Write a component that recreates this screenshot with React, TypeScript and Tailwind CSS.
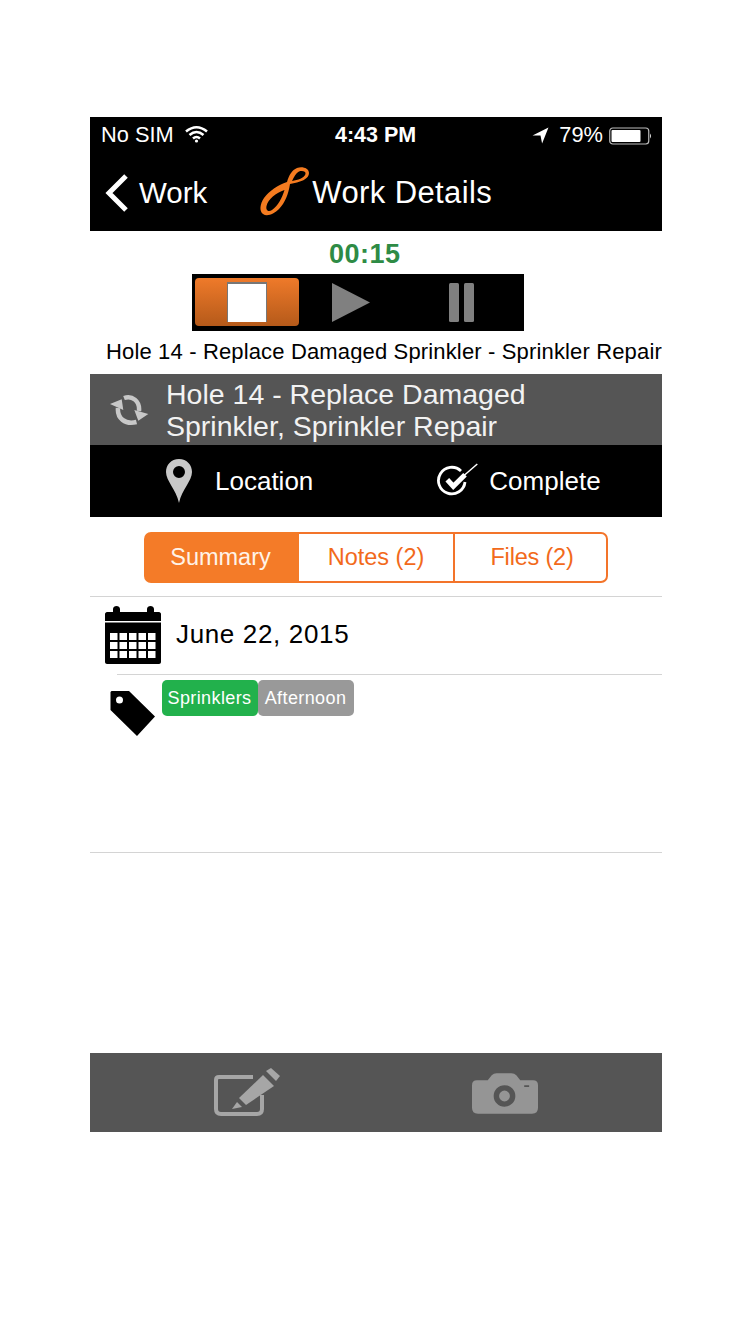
export default function App() {
  return (
    <div className="w-[749px] h-[1321px] bg-white pt-[117px] pl-[90px] font-['Liberation_Sans',Arial,sans-serif] overflow-hidden">
      <div className="w-[572px] h-[1015px] flex flex-col">
        <header className="h-[114px] bg-black text-white shrink-0">
          <div className="h-[37px] pl-[11px] pr-[9px] flex items-center text-[21.8px] relative">
            <span>No SIM</span>
            <svg className="ml-[11px] mb-[3px]" width="23" height="18" viewBox="0 0 23 18" fill="none" stroke="#fff" strokeWidth="2.6">
              <path d="M1 6.5 Q11.5 -2 22 6.5" />
              <path d="M4.5 10 Q11.5 4 18.5 10" />
              <path d="M8 13.5 Q11.5 10.5 15 13.5" />
              <circle cx="11.5" cy="16" r="1.6" fill="#fff" stroke="none" />
            </svg>
            <span className="absolute left-[245px] font-bold text-[21.5px]">4:43 PM</span>
            <div className="ml-auto flex items-center">
              <svg width="17" height="17" viewBox="0 0 16 16" fill="#fff"><path d="M0.5 8 L15.5 0.5 L9.5 15.5 L8 8 Z" /></svg>
              <span className="ml-[10px]">79%</span>
              <svg className="ml-[6px]" width="44" height="18" viewBox="0 0 44 18" fill="none">
                <rect x="0.75" y="1" width="39" height="16" rx="3" stroke="#bbb" strokeWidth="1.2" />
                <rect x="2.5" y="3" width="29" height="12" rx="1" fill="#fff" />
                <path d="M41 6.5 Q43 9 41 11.5 Z" fill="#ddd" />
              </svg>
            </div>
          </div>
          <div className="h-[77px] flex items-center relative">
            <svg className="ml-[15px]" width="24" height="38" viewBox="0 0 24 38" fill="none" stroke="#fff" strokeWidth="5">
              <path d="M21 2 L4 19 L21 36" />
            </svg>
            <span className="ml-[10px] text-[29.5px] leading-none">Work</span>
            <svg className="ml-[52px] mt-[-2px]" width="52" height="52" viewBox="0 0 52 52">
              <path fillRule="evenodd" fill="#f47b20" d="M28 16 C30 9 33 4 38 2 C43 0 50 2 50 7 C50 12 44 15 38 16.5 L31 18 C29.5 28 26 37 20 43 C15 48 8 51 4 48 C0 45 1 38 5 32 C10 25 19 19 28 16 Z M33 15 C39 14 45 12 46.5 8 C47 5 43 4.5 40 5.5 C37 7 35 11 33 15 Z M25.5 24 C17 27 9 33 7.5 40 C6.5 45 10 46 13 44 C19 40 23 32 25.5 24 Z" />
            </svg>
            <span className="text-[31px] leading-none ml-[1px] tracking-[0.4px]">Work Details</span>
          </div>
        </header>

        <div className="h-[143px] shrink-0 flex flex-col relative">
          <div className="pt-[9px] pl-[239px] text-[27px] leading-[29px] font-bold text-[#2e8b45] tracking-[0.5px]">00:15</div>
          <div className="ml-[102px] mt-[5px] w-[332px] h-[57px] bg-black flex items-start pl-[3px] pt-[4px]">
            <div className="w-[104px] h-[48px] rounded-[4px] bg-gradient-to-b from-[#ef7a2a] to-[#b55a1a] flex items-center justify-center">
              <div className="w-[40px] h-[40px] bg-white border-t-2 border-x border-[#777]" />
            </div>
            <svg className="ml-[33px] mt-[5px]" width="38" height="39" viewBox="0 0 38 39"><path d="M0 0 L38 19.5 L0 39 Z" fill="#808080" /></svg>
            <svg className="ml-[79px] mt-[5px]" width="26" height="39" viewBox="0 0 26 39" fill="#808080">
              <rect width="10" height="39" rx="1.5" />
              <rect x="15" width="10" height="39" rx="1.5" />
            </svg>
          </div>
          <div className="pl-[16px] mt-[9px] text-[22px] leading-[23px] text-black whitespace-nowrap overflow-hidden tracking-[0.15px]">Hole 14 - Replace Damaged Sprinkler - Sprinkler Repair</div>
        </div>

        <div className="h-[71px] bg-[#555] flex items-center shrink-0 text-[#f2f2f2]">
          <svg className="ml-[20px]" width="40" height="32" viewBox="0 0 40 32" fill="none">
            <path d="M14 4 C22 1 30 7 29 17" stroke="#c8c8c8" strokeWidth="4.5" />
            <path d="M26.5 28 C15 31 7 24 8 14" stroke="#c8c8c8" strokeWidth="4.5" />
            <path d="M24.3 16 L38.3 20 L28.3 26.7 Z M0 10 L11.7 5.3 L13.3 16 Z" fill="#c8c8c8" />
          </svg>
          <div className="ml-[16px] text-[28.5px] leading-[32px]">Hole 14 - Replace Damaged<br />Sprinkler, Sprinkler Repair</div>
        </div>

        <div className="h-[72px] bg-black text-white flex items-center shrink-0 text-[26px]">
          <svg className="ml-[76px]" width="26" height="44" viewBox="0 0 26 44">
            <path fillRule="evenodd" fill="#c8c8c8" d="M13 0 C21 0 26 6 26 13 C26 22 16 30 13 44 C10 30 0 22 0 13 C0 6 5 0 13 0 Z M13 7 A6 6 0 1 0 13 19 A6 6 0 1 0 13 7 Z" />
          </svg>
          <span className="ml-[23px] mt-[1px]">Location</span>
          <svg className="ml-[124px]" width="46" height="36" viewBox="0 0 46 36" fill="none" stroke="#fff">
            <path d="M24 8 A13.3 13.3 0 1 0 28 19" strokeWidth="2.8" />
            <path d="M10.3 16.7 L16.3 23.3 L28 11.7" strokeWidth="5" />
            <path d="M27 12.5 L40.3 1" strokeWidth="1.5" />
          </svg>
          <span className="ml-[6px] mt-[1px]">Complete</span>
        </div>

        <div className="mt-[15px] ml-[54px] w-[464px] h-[51px] flex text-[23.5px] shrink-0 text-[#f26a1b]">
          <div className="w-[155px] bg-[#f47b28] text-[#fff3e8] rounded-l-[7px] flex items-center justify-center pt-[1px] pr-[2px]">Summary</div>
          <div className="w-[154px] border-y-2 border-[#f3742a] flex items-center justify-center pt-[1px]">Notes (2)</div>
          <div className="flex-1 border-2 border-[#f3742a] rounded-r-[7px] flex items-center justify-center pt-[1px] pl-[3px] tracking-[-0.2px]">Files (2)</div>
        </div>

        <div className="mt-[13px] border-t border-[#d4d4d4] h-[78px] shrink-0 flex items-center">
          <svg className="ml-[15px] mt-[-1px]" width="56" height="58" viewBox="0 0 56 58">
            <path d="M2 6 H8 V3 C8 -1 15 -1 15 3 V6 H42 V3 C42 -1 49 -1 49 3 V6 H54 C55 6 56 7 56 8 V15 H0 V8 C0 7 1 6 2 6 Z" />
            <path d="M0 16.5 H56 V56 C56 57 55 58 54 58 H2 C1 58 0 57 0 56 Z" />
            <g fill="#fff">
              <rect x="5" y="27" width="7.5" height="7" /><rect x="14.5" y="27" width="7.5" height="7" /><rect x="24" y="27" width="7.5" height="7" /><rect x="33.5" y="27" width="7.5" height="7" /><rect x="43" y="27" width="7.5" height="7" />
              <rect x="5" y="36" width="7.5" height="7" /><rect x="14.5" y="36" width="7.5" height="7" /><rect x="24" y="36" width="7.5" height="7" /><rect x="33.5" y="36" width="7.5" height="7" /><rect x="43" y="36" width="7.5" height="7" />
              <rect x="5" y="45" width="7.5" height="7" /><rect x="14.5" y="45" width="7.5" height="7" /><rect x="24" y="45" width="7.5" height="7" /><rect x="33.5" y="45" width="7.5" height="7" /><rect x="43" y="45" width="7.5" height="7" />
            </g>
          </svg>
          <span className="ml-[15px] mt-[-3px] text-[26px] tracking-[0.65px] text-black">June 22, 2015</span>
        </div>

        <div className="ml-[27px] border-t border-[#d4d4d4] h-[178px] shrink-0 flex items-start pt-[5px]">
          <svg className="ml-[-7px] mt-[10px]" width="45" height="46" viewBox="0 0 45 46">
            <path fillRule="evenodd" d="M1.5 1 H19 L45 26.5 L27 46 L0.5 20 V2 Z M9.5 6.5 A3.5 3.5 0 1 0 9.5 13.5 A3.5 3.5 0 1 0 9.5 6.5 Z" />
          </svg>
          <div className="flex text-[18px] text-white ml-[7px]">
            <div className="h-[36px] w-[96px] rounded-[5px] bg-[#22b14c] flex items-center justify-center tracking-[0.4px] pr-[1px]">Sprinklers</div>
            <div className="h-[36px] w-[96px] rounded-[5px] bg-[#999] flex items-center justify-center tracking-[0.4px] pr-[1px]">Afternoon</div>
          </div>
        </div>

        <div className="border-t border-[#d4d4d4] flex-1" />

        <div className="h-[79px] bg-[#555] shrink-0 flex items-center">
          <svg className="ml-[123px]" width="68" height="50" viewBox="0 0 68 50" fill="none">
            <path d="M40 9 H6 Q3 9 3 12 V41 Q3 46 8 46 H44 Q49 46 49 41 V27" stroke="#a6a6a6" strokeWidth="4" />
            <path d="M50 7 L61 18 L33 37 L26 30 Z" fill="#a6a6a6" />
            <path d="M24 34 L29 39 L19 41 Z" fill="#a6a6a6" />
            <path d="M53 3 L58 0 L67 8 L63 13 Z" fill="#a6a6a6" />
          </svg>
          <svg className="ml-[191px] mt-[1px]" width="66" height="41" viewBox="0 0 67 41">
            <path fillRule="evenodd" fill="#959595" d="M5 7 H16 L20 2 Q22 0 25 0 H40 Q43 0 45 2 L49 7 H62 Q67 7 67 12 V35 Q67 41 61 41 H6 Q0 41 0 35 V12 Q0 7 5 7 Z M33 12 A11 11 0 1 0 33 34 A11 11 0 1 0 33 12 Z M33 17.5 A5.5 5.5 0 1 1 33 28.5 A5.5 5.5 0 1 1 33 17.5 Z M53 12 V14 H58 V12 Z" />
          </svg>
        </div>
      </div>
    </div>
  );
}
